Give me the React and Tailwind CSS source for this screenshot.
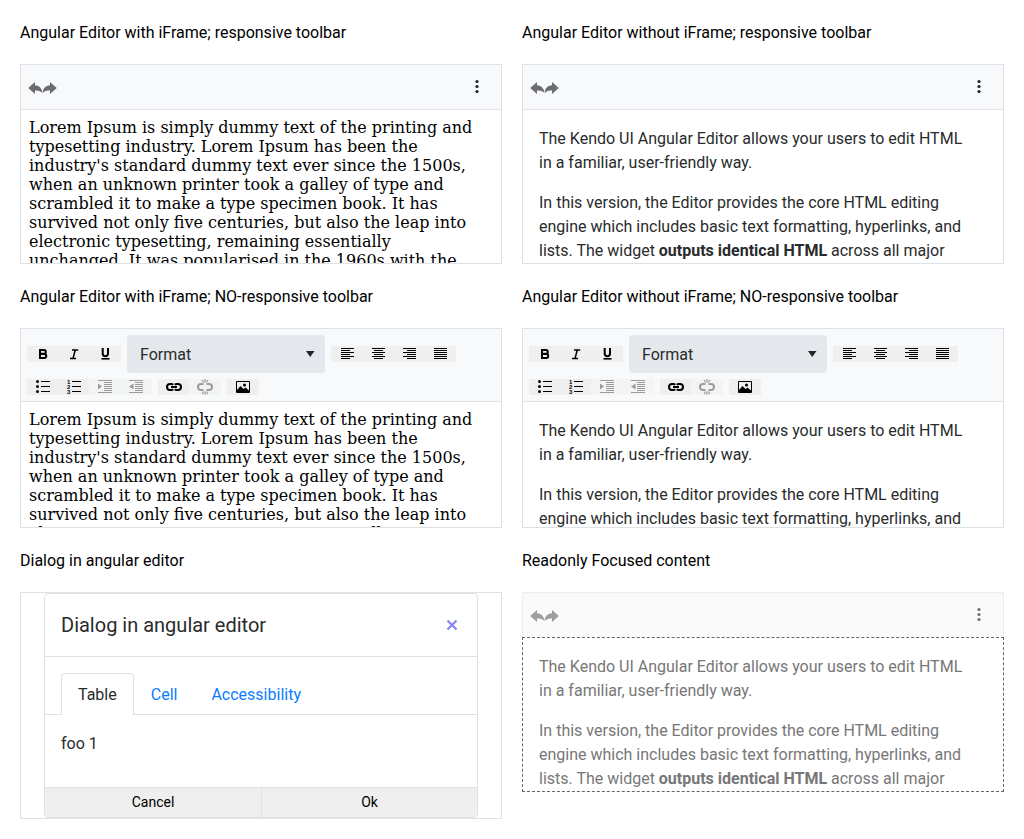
import React from 'react';

function Icon({ children, className = '' }) {
  return (
    <svg viewBox="0 0 16 16" className={`block size-4 ${className}`} fill="currentColor" aria-hidden="true">
      {children}
    </svg>
  );
}

const rows = (list) => list.map(([x, y, w]) => <rect key={y} x={x} y={y} width={w} height="1" />);

const icons = {
  bold: (
    <path
      d="M5 4h3.9a1.9 1.9 0 0 1 0 3.800H5zM5 7.900h4.200a2.050 2.050 0 0 1 0 4.100H5z"
      fill="none"
      stroke="currentColor"
      strokeWidth="2"
    />
  ),
  italic: <path d="M6 4h6.200M4 12.400h6M9.300 4 7 12.400" fill="none" stroke="currentColor" strokeWidth="1.500" />,
  underline: (
    <>
      <path d="M5.700 2v5.600a2.650 2.650 0 0 0 5.300 0V2" fill="none" stroke="currentColor" strokeWidth="2" />
      <rect x="4.500" y="12" width="8" height="1.600" />
    </>
  ),
  left: rows([[2, 2, 13], [2, 4, 9], [2, 6, 13], [2, 8, 9], [2, 10, 13], [2, 12, 9]]),
  center: rows([[2, 2, 13], [4, 4, 9], [2, 6, 13], [4, 8, 9], [2, 10, 13], [4, 12, 9]]),
  right: rows([[2, 2, 13], [6, 4, 9], [2, 6, 13], [6, 8, 9], [2, 10, 13], [6, 12, 9]]),
  justify: rows([[2, 2, 13], [2, 4, 13], [2, 6, 13], [2, 8, 13], [2, 10, 13], [2, 12, 13]]),
  bullets: (
    <>
      <circle cx="2.500" cy="2.500" r="1.500" />
      <circle cx="2.500" cy="7.500" r="1.500" />
      <circle cx="2.500" cy="12.500" r="1.500" />
      {rows([[6, 2, 9], [6, 7, 9], [6, 12, 9]])}
    </>
  ),
  numbers: (
    <>
      <g className="font-['Liberation_Sans',sans-serif] text-[6px] font-bold">
        <text x="1" y="5">1</text>
        <text x="1" y="10">2</text>
        <text x="1" y="15">3</text>
      </g>
      {rows([[6, 2, 9], [6, 7, 9], [6, 12, 9]])}
    </>
  ),
  indent: (
    <>
      {rows([[1, 1, 14], [7, 3, 8], [7, 5, 8], [7, 7, 8], [7, 9, 8], [7, 11, 8], [1, 13, 14]])}
      <path d="M1 4.500 5 7.500 1 10.500z" />
    </>
  ),
  outdent: (
    <>
      {rows([[1, 1, 14], [7, 3, 8], [7, 5, 8], [7, 7, 8], [7, 9, 8], [7, 11, 8], [1, 13, 14]])}
      <path d="M5.500 4.500 1 7.500l4.500 3z" />
    </>
  ),
  link: (
    <path
      d="M7.300 10.200a3 3 0 0 1-2.300.8H4a3 3 0 0 1 0-6h1a3 3 0 0 1 2.300.8M8.700 5.800A3 3 0 0 1 11 5h1a3 3 0 0 1 0 6h-1a3 3 0 0 1-2.300-.8M5 8h6"
      fill="none"
      stroke="currentColor"
      strokeWidth="2"
    />
  ),
  unlink: (
    <>
      <path
        d="M6.500 11H4a3 3 0 0 1 0-6h2.500M9.500 5H12a3 3 0 0 1 0 6H9.500"
        fill="none"
        stroke="currentColor"
        strokeWidth="2"
      />
      <path d="M8 0v3.500M5 .8l1.700 2.700M11 .8 9.300 3.500M8 16v-3.500M5 15.200l1.700-2.700M11 15.200l-1.700-2.700" fill="none" stroke="currentColor" strokeWidth="1.200" />
    </>
  ),
  image: (
    <path
      fillRule="evenodd"
      d="M2 2h12a1 1 0 0 1 1 1v10a1 1 0 0 1-1 1H2a1 1 0 0 1-1-1V3a1 1 0 0 1 1-1zM2 3v8l3.500-4L8.500 10 10.500 8.500 14 11.500V3zM9.500 4.500a1.500 1.500 0 1 1 0 3 1.500 1.500 0 0 1 0-3z"
    />
  ),
};

function ToolGroup({ tools }) {
  return (
    <div className="flex">
      {tools.map(([name, label, disabled]) => (
        <button
          key={name}
          type="button"
          aria-label={label}
          disabled={disabled}
          className="-ml-px bg-[#efefef] px-2 text-black first:ml-0 disabled:bg-[#f3f4f4] disabled:text-[#9c9c9c]"
        >
          <Icon>{icons[name]}</Icon>
        </button>
      ))}
    </div>
  );
}

function FullToolbar() {
  return (
    <div className="flex shrink-0 flex-wrap items-center gap-1.5 border-b border-[#dee2e6] bg-[#f7f9fb] p-1.5">
      <ToolGroup tools={[['bold', 'Bold'], ['italic', 'Italic'], ['underline', 'Underline']]} />
      <div className="grid w-[198px] items-center">
        <select
          aria-label="Format"
          className="col-start-1 row-start-1 h-[38px] w-full appearance-none rounded bg-[#e4e7eb] px-[13px] pt-0.5 text-base text-[#292b2c]"
        >
          <option>Format</option>
        </select>
        <svg viewBox="0 0 10 6" className="pointer-events-none col-start-1 row-start-1 mr-2.5 h-1.5 w-2.5 justify-self-end" fill="#212529" aria-hidden="true">
          <path d="M1 0h8.500L5.200 6z" />
        </svg>
      </div>
      <ToolGroup
        tools={[['left', 'Align left'], ['center', 'Align center'], ['right', 'Align right'], ['justify', 'Justify']]}
      />
      <ToolGroup
        tools={[
          ['bullets', 'Bulleted list'],
          ['numbers', 'Numbered list'],
          ['indent', 'Indent', true],
          ['outdent', 'Outdent', true],
        ]}
      />
      <ToolGroup tools={[['link', 'Insert link'], ['unlink', 'Remove link', true]]} />
      <ToolGroup tools={[['image', 'Insert image']]} />
    </div>
  );
}

const arrow = 'M1.200 9 8 3v3.200c4.300.3 7 2.800 7.400 7.900C13.800 11.900 11.500 11.200 8 11.500V15z';

function CompactToolbar({ className }) {
  return (
    <div className={`flex h-[45px] shrink-0 items-center justify-between pl-1.5 pr-4 ${className}`}>
      <div className="flex text-[#6c6d6f]">
        <button type="button" aria-label="Undo">
          <Icon><path d={arrow} /></Icon>
        </button>
        <button type="button" aria-label="Redo" className="-ml-px">
          <Icon className="-scale-x-100"><path d={arrow} /></Icon>
        </button>
      </div>
      <button type="button" aria-label="More tools" className="text-[#212529]">
        <Icon>
          <circle cx="8" cy="2.500" r="1.600" />
          <circle cx="8" cy="7.500" r="1.600" />
          <circle cx="8" cy="12.500" r="1.600" />
        </Icon>
      </button>
    </div>
  );
}

function LoremText() {
  return (
    <div className="min-h-0 flex-1 overflow-hidden p-2 pr-6 font-['DejaVu_Serif',serif] text-base leading-[19px] text-black">
      Lorem Ipsum is simply dummy text of the printing and typesetting industry. Lorem Ipsum has been the
      industry's standard dummy text ever since the 1500s, when an unknown printer took a galley of type and
      scrambled it to make a type specimen book. It has survived not only five centuries, but also the leap into
      electronic typesetting, remaining essentially unchanged. It was popularised in the 1960s with the release of
      Letraset sheets containing Lorem Ipsum passages.
    </div>
  );
}

function KendoText({ className = '' }) {
  return (
    <div className={`flex min-h-0 flex-1 flex-col gap-4 overflow-hidden pt-[17px] pr-8 pb-4 pl-4 text-base ${className}`}>
      <p>The Kendo UI Angular Editor allows your users to edit HTML in a familiar, user-friendly way.</p>
      <p>
        In this version, the Editor provides the core HTML editing engine which includes basic text formatting,
        hyperlinks, and lists. The widget <strong className="font-bold">outputs identical HTML</strong> across all
        major browsers, follows accessibility standards, and provides API for content manipulation.
      </p>
    </div>
  );
}

function Section({ title, children }) {
  return (
    <section className="flex min-w-0 flex-col gap-[18px]">
      <h2 className="text-base leading-[26px] text-black">{title}</h2>
      {children}
    </section>
  );
}

const frame = 'flex h-[200px] flex-col border border-[#dee2e6] bg-white';
const compact = 'border-b border-[#dee2e6] bg-[#f7f9fb]';

function TabsDialog() {
  return (
    <div className="border border-[#dee2e6] px-[23px]">
      <div role="dialog" aria-label="Dialog in angular editor" className="overflow-hidden rounded border border-[#dee2e6] text-[#292b2c]">
        <div className="flex h-[63px] items-center justify-between border-b border-[#dee2e6] px-4">
          <h3 className="text-xl">Dialog in angular editor</h3>
          <button type="button" aria-label="Close" className="mr-px text-[#8a84f7]">
            <Icon>
              <path d="m3.500 3.500 9 9M12.500 3.500l-9 9" fill="none" stroke="currentColor" strokeWidth="2.300" />
            </Icon>
          </button>
        </div>
        <div role="tablist" className="flex border-b border-[#dee2e6] px-4 pt-4 text-base text-[#0a7cff]">
          <button type="button" role="tab" aria-selected="true" className="-mb-px rounded-t border border-b-0 border-[#dee2e6] bg-white px-4 pt-[9px] pb-2 text-[#292b2c]">
            Table
          </button>
          <button type="button" role="tab" aria-selected="false" className="px-[17px] pt-2.5 pb-[7px]">Cell</button>
          <button type="button" role="tab" aria-selected="false" className="px-[17px] pt-2.5 pb-[7px]">Accessibility</button>
        </div>
        <div role="tabpanel" className="px-4 pt-[17px] pb-[31px] text-base">foo 1</div>
        <div className="grid grid-cols-2 border-t border-[#dee2e6] text-sm text-black">
          <button type="button" className="h-[29px] bg-[#efefef] pb-0.5">Cancel</button>
          <button type="button" className="h-[29px] border-l border-[#dee2e6] bg-[#efefef] pb-0.5">Ok</button>
        </div>
      </div>
    </div>
  );
}

export default function App() {
  return (
    <main className="grid grid-cols-2 gap-5 bg-white p-5 font-['Roboto',sans-serif]">
      <Section title="Angular Editor with iFrame; responsive toolbar">
        <div className={frame}>
          <CompactToolbar className={compact} />
          <LoremText />
        </div>
      </Section>
      <Section title="Angular Editor without iFrame; responsive toolbar">
        <div className={frame}>
          <CompactToolbar className={compact} />
          <KendoText className="text-[#292b2c]" />
        </div>
      </Section>
      <Section title="Angular Editor with iFrame; NO-responsive toolbar">
        <div className={frame}>
          <FullToolbar />
          <LoremText />
        </div>
      </Section>
      <Section title="Angular Editor without iFrame; NO-responsive toolbar">
        <div className={frame}>
          <FullToolbar />
          <KendoText className="text-[#292b2c]" />
        </div>
      </Section>
      <Section title="Dialog in angular editor">
        <TabsDialog />
      </Section>
      <Section title="Readonly Focused content">
        <div className="flex h-[200px] flex-col">
          <div className="border-x border-t border-[#ebedf0] bg-[#fafafa]">
            <CompactToolbar className="-mb-px border-b border-transparent opacity-65" />
          </div>
          <KendoText className="border border-dashed border-[#666666] text-[#777778]" />
        </div>
      </Section>
    </main>
  );
}
